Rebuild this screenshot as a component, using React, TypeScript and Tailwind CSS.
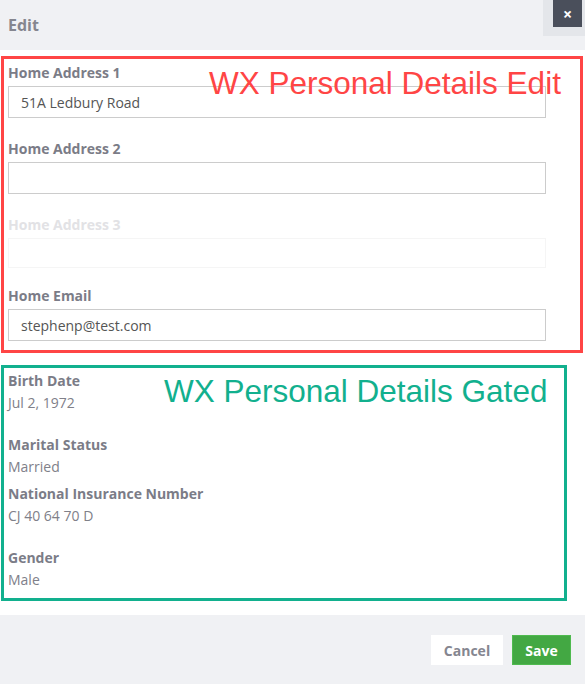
import React from 'react';

const font = { fontFamily: '"Open Sans", "Liberation Sans", sans-serif' };

function Field({
    label,
    value,
    faded,
    inputClass = 'h-[32px]',
    className = 'mb-[21px]',
}: {
    label: string;
    value?: string;
    faded?: boolean;
    inputClass?: string;
    className?: string;
}) {
    return (
        <div className={className}>
            <div
                className={`text-[14px] leading-[20px] font-bold mb-[3px] ${
                    faded ? 'text-[#e2e2e5]' : 'text-[#7b7c87]'
                }`}
            >
                {label}
            </div>
            <div
                className={`${inputClass} w-[538px] bg-white border flex items-center px-[12px] text-[14px] text-[#555] ${
                    faded ? 'border-[#f5f5f5]' : 'border-[#cccccc]'
                }`}
            >
                {value}
            </div>
        </div>
    );
}

function Detail({ label, value, className }: { label: string; value: string; className: string }) {
    return (
        <div className={className}>
            <div className="text-[14px] leading-[20px] font-bold text-[#7b7c87]">{label}</div>
            <div className="text-[14px] leading-[22px] text-[#808089] mt-[1px]">{value}</div>
        </div>
    );
}

export default function App() {
    return (
        <div className="w-[585px] h-[684px] bg-white flex flex-col overflow-hidden" style={font}>
            {/* header */}
            <div className="h-[50px] bg-[#f0f1f4] flex items-start justify-between shrink-0">
                <div className="pl-[8px] pt-[13px] text-[16px] leading-[24px] font-bold text-[#85868f]">Edit</div>
                <div className="w-[42px] h-[36px] bg-[#e4e6ea] flex justify-end pr-[3px]">
                    <button className="w-[29px] h-[27px] bg-[#4a4f5b] text-white text-[16px] font-bold leading-none flex items-center justify-center">
                        ×
                    </button>
                </div>
            </div>

            <div className="flex-1 pt-[6px]">
                {/* edit section */}
                <div className="relative ml-[1px] w-[582px] border-[3px] border-[#ff4545] pl-[4px] pt-[4px] pb-[9px]">
                    <Field label="Home Address 1" value="51A Ledbury Road" />
                    <Field label="Home Address 2" />
                    <Field label="Home Address 3" faded inputClass="h-[30px]" className="mb-[18px]" />
                    <Field label="Home Email" value="stephenp@test.com" className="" />
                    <div
                        className="absolute left-[205px] top-[9px] text-[31.5px] leading-none text-[#ff4545] whitespace-nowrap"
                        style={{ fontFamily: '"Liberation Sans", Arial, sans-serif' }}
                    >
                        WX Personal Details Edit
                    </div>
                </div>

                {/* gated section */}
                <div className="relative mt-[12px] ml-[1px] w-[566px] border-[3px] border-[#12b08e] pl-[4px] pt-[3px] pb-[7px]">
                    <Detail label="Birth Date" value="Jul 2, 1972" className="mb-[21px]" />
                    <Detail label="Marital Status" value="Married" className="mb-[6px]" />
                    <Detail label="National Insurance Number" value="CJ 40 64 70 D" className="mb-[21px]" />
                    <Detail label="Gender" value="Male" className="" />
                    <div
                        className="absolute left-[160px] top-[8px] text-[31.5px] leading-none text-[#12b08e] whitespace-nowrap"
                        style={{ fontFamily: '"Liberation Sans", Arial, sans-serif' }}
                    >
                        WX Personal Details Gated
                    </div>
                </div>
            </div>

            {/* footer */}
            <div className="h-[69px] bg-[#f0f1f4] shrink-0 flex justify-end items-start pt-[20px] pr-[14px] gap-[9px]">
                <button className="w-[72px] h-[30px] bg-white text-[14px] font-bold text-[#858690]">Cancel</button>
                <button className="w-[59px] h-[30px] bg-[#43a843] border border-[#4fba4f] text-[14px] font-bold text-white">
                    Save
                </button>
            </div>
        </div>
    );
}
